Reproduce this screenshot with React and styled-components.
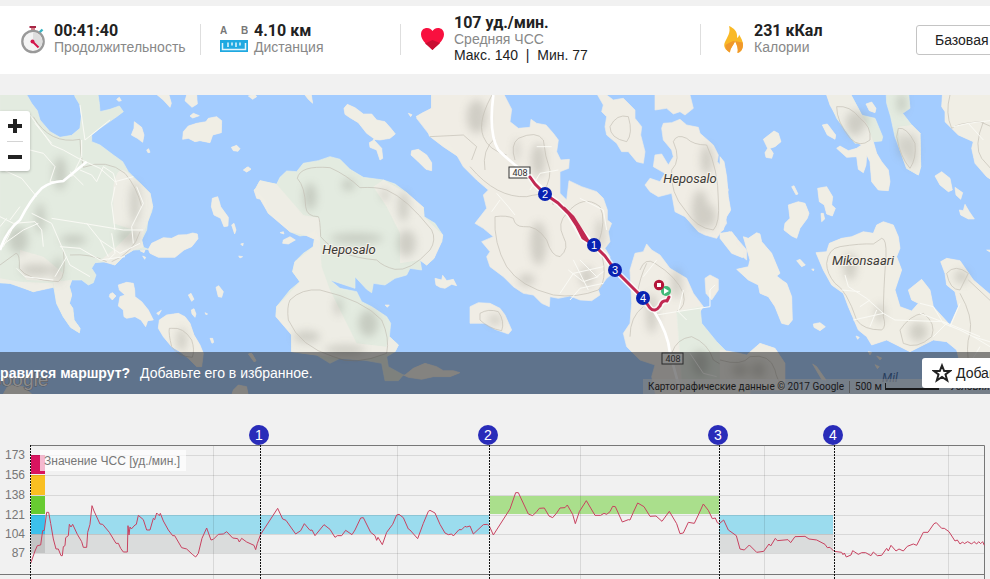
import React from "react";
import styled, { createGlobalStyle } from "styled-components";

const GlobalStyle = createGlobalStyle`
  * { box-sizing: border-box; }
  body {
    margin: 0;
    background: #f1f1f1;
    color: #222;
    font: 14px/16px "Liberation Sans", Arial, sans-serif;
    overflow-x: hidden;
  }
  button { font: inherit; color: inherit; cursor: pointer; }
`;

const Page = styled.main`
  display: flex;
  flex-direction: column;
  padding-top: 6px;
  overflow: hidden;
`;

const Summary = styled.header`
  display: flex;
  align-items: center;
  min-height: 68px;
  margin-bottom: 21px;
  background: #fff;
`;

const Stat = styled.section`
  display: flex;
  flex: 0 0 ${(p) => p.$basis}px;
  align-items: center;
  padding-bottom: 2px;
  &::before {
    content: "";
    width: 1px;
    height: 31px;
    margin-right: 19px;
    background: #dedede;
  }
  &:first-child::before { background: none; }
`;

const StatIcon = styled.span`
  display: flex;
  flex: 0 0 34px;
`;

const StatText = styled.div`
  display: flex;
  flex-direction: column;
  white-space: nowrap;
`;

const StatValue = styled.strong`
  font: bold 16px/16px Roboto, sans-serif;
  color: #222;
`;

const StatLabel = styled.span`
  color: #888;
`;

const StatRange = styled.span`
  color: #222;
  white-space: pre;
`;

const ModeButton = styled.button`
  flex: 0 0 140px;
  height: 30px;
  padding: 0 18px;
  text-align: left;
  background: #fff;
  border: 1px solid #c4c4c4;
  border-radius: 3px;
`;

const MapPanel = styled.section`
  position: relative;
  height: 299px;
  overflow: hidden;
  background: #a3ccff;
`;

const MapDrawing = styled.svg`
  display: block;
  width: 100%;
  height: 100%;
`;

const ZoomControls = styled.div`
  position: absolute;
  top: 16px;
  left: 0;
  display: flex;
  flex-direction: column;
  align-items: center;
  width: 30px;
  background: #fff;
  border-radius: 0 3px 3px 0;
  box-shadow: 0 1px 3px rgba(0, 0, 0, 0.25);
`;

const ZoomButton = styled.button`
  display: flex;
  align-items: center;
  justify-content: center;
  width: 16px;
  height: 30px;
  padding: 0;
  background: none;
  border: 0;
  & + & { border-top: 1px solid #d4d4d4; }
`;

const Attribution = styled.footer`
  position: absolute;
  right: 0;
  bottom: 0;
  display: flex;
  align-items: center;
  width: 347px;
  height: 15px;
  padding-left: 5px;
  gap: 5px;
  overflow: hidden;
  white-space: nowrap;
  background: rgba(245, 245, 245, 0.6);
  color: #111;
  font: 10px/14px Roboto, sans-serif;
`;

const Divider = styled.i`
  flex: none;
  width: 1px;
  height: 12px;
  background: #999;
`;

const Scale = styled.span`
  display: flex;
  align-items: center;
  gap: 3px;
  &::after {
    content: "";
    width: 52px;
    height: 5px;
    border: solid #111;
    border-width: 0 1px 2px;
  }
`;

const TermsLink = styled.a`
  margin-left: 6px;
  color: inherit;
  text-decoration: none;
`;

const Banner = styled.div`
  position: absolute;
  inset: auto 0 0 0;
  display: grid;
  grid-template-columns: minmax(0, 1fr) 68px;
  align-items: center;
  height: 42px;
  color: #fff;
  background: rgba(33, 33, 35, 0.52);
`;

const BannerText = styled.p`
  display: flex;
  gap: 10px;
  margin: 0 0 0 -10px;
  white-space: nowrap;
`;

const FavoriteButton = styled.button`
  display: flex;
  align-items: center;
  gap: 4px;
  width: 116px;
  height: 30px;
  padding: 0 10px;
  color: #222;
  background: #fff;
  border: 0;
  border-radius: 3px;
`;

const ChartPanel = styled.section`
  padding-top: 26px;
`;

const ChartDrawing = styled.svg`
  display: block;
  width: 100%;
  height: auto;
  font-family: "Liberation Sans", Arial, sans-serif;
`;

/* ---------- icons ---------- */

const Stopwatch = () => (
  <svg width="26" height="30" viewBox="0 0 26 30" aria-hidden="true">
    <path d="M19.500 8.500l3-3" stroke="#38b4c4" strokeWidth="2.400" />
    <path d="M11 3h4v5h-4z" fill="#d5828c" />
    <path d="M9.500 2h6.500v2h-6.500z" fill="#a82545" />
    <circle cx="13" cy="17.500" r="10.700" fill="#f4f4f4" stroke="#999" strokeWidth="2.300" />
    <path d="M13 8.500a9 9 0 0 1 6.500 15.500L13 17.500z" fill="#dedede" />
    <path d="M12.500 17.500l6 6" stroke="#d4144b" strokeWidth="2" />
    <circle cx="12.500" cy="17.500" r="2" fill="#d4144b" />
  </svg>
);

const Ruler = () => (
  <svg width="28" height="28" viewBox="0 0 28 28" aria-hidden="true">
    <g fontFamily="Liberation Sans, Arial, sans-serif" fontSize="10" fontWeight="bold" fill="#777">
      <text x="0" y="9">A</text>
      <text x="21" y="9">B</text>
    </g>
    <path d="M0 15h28v12H0z" fill="#1fa9e1" />
    <path d="M2.500 18v6.500h23V18M8 17.500v4.500M12 17.500v3M16 17.500v4.500M20 17.500v3" fill="none" stroke="#e5f6fd" strokeWidth="1.500" />
  </svg>
);

const Heart = () => (
  <svg width="26" height="24" viewBox="0 0 26 24" aria-hidden="true">
    <path d="M12.500 23C9 19 1 14 1 7.500C1 3 4 1 7 1S11.500 2.500 12.500 4C13.500 2.500 15 1 18 1S24 3 24 7.500C24 14 16 19 12.500 23z" fill="#f8103f" />
    <path d="M12.500 13L20 16C18 18 14.500 21 12.500 23C10.500 21 7.500 18.500 5 16.500z" fill="#c80e32" />
  </svg>
);

const Flame = () => (
  <svg width="28" height="30" viewBox="0 0 28 30" aria-hidden="true">
    <path d="M9 2C14 4 18 8 17 14c1.500-1 2-2 2-3.500C21 14 23 17 23 21c0 4-2 7-5.500 8C18.500 25 17 21 15 17c-1 4-5 7-5 11.500C5 26 3 22 5 18 7 13 11 9 9 2z" fill="#f9b926" />
    <path d="M15 17c-3 0-6 2-9.500 4-.500 3 1 6 4.500 7.500C10 24 14 21 15 17zM15 17c3 1 6 1 7.700 1.500C23.500 23 22 28 17.500 29 18.500 25 17 21 15 17z" fill="#f0982c" />
  </svg>
);

const Plus = () => (
  <svg width="14" height="14" viewBox="0 0 14 14" aria-hidden="true">
    <path d="M7 0v14M0 7h14" stroke="#222" strokeWidth="4" />
  </svg>
);

const Minus = () => (
  <svg width="14" height="4" viewBox="0 0 14 4" aria-hidden="true">
    <path d="M0 2h14" stroke="#222" strokeWidth="4" />
  </svg>
);

const Star = () => (
  <svg width="20" height="20" viewBox="0 0 20 20" aria-hidden="true">
    <path d="M10 2.500L12.200 8H18L13.500 11.500L15.200 17.500L10 14L4.800 17.500L6.500 11.500L2 8H7.800z" fill="none" stroke="#222" strokeWidth="2" />
  </svg>
);

/* ---------- map ---------- */

/* Each tile is drawn at three times the map scale, from its own left edge. */
const tiles = [
  {
    x: 0,
    green: [
      "M0 0H72L95 40L112 62L120 90L150 125L180 142L215 136L240 115L244 80L240 45L225 20L220 0H292L298 40L300 65L330 58L358 48L370 65L350 80L300 115L275 135L275 155L300 165L340 195L368 215L385 245L420 280L450 310L458 350L455 365L443 395L440 420L425 450L430 472L445 478L400 480L375 495L345 525L320 515L285 518L275 535L288 555L280 578L265 585L245 570L215 570L208 590L215 615L208 640L218 655L222 690L240 715L238 728L212 712L190 680L170 640L163 600L160 590L120 595L100 605L70 592L30 580L0 578Z",
    ],
    land: [
      "M340 290Q350 225 380 245L420 280L450 310L458 350L443 395L425 450L430 472L400 480L375 495L345 525L300 512L340 480L400 420L340 400Z",
      "M160 575L215 570L208 590L215 615L208 640L218 655L222 690L240 715L238 728L212 712L190 680L170 640Z",
      "M60 480L130 500L190 550L180 575L80 570L60 540Z",
      "M0 565L60 575L160 580L160 592L100 605L30 580L0 578Z",
      "M472 15L490 30L510 52L514 40L507 15Z",
      "M560 15L555 32L576 52L592 42L590 15Z",
      "M350 28L358 22L364 32L356 34Z",
      "M570 78L580 70L598 77L578 84Z",
      "M403 95L425 112L432 135L428 157L412 145L394 135L402 115Z",
      "M440 180L446 176L450 187L444 188Z",
      "M590 100L618 95L625 85L650 80L665 92L664 128L638 135L630 158L600 152L585 155L565 145L548 148L550 125L565 108Z",
      "M694 172L710 166L720 176L714 184L700 182Z",
      "M733 238L742 231L753 238L740 246Z",
      "M762 300L775 290L790 300L790 330L770 325Z",
      "M637 325L653 320L658 335L662 350L685 382L684 408L672 410L662 385L642 375L634 350Z",
      "M695 405L702 400L708 420L704 432Z",
      "M445 478L455 460L490 443L515 445L535 435L560 434L578 429L592 432L594 446L575 470L552 480L540 490L525 502L475 502L450 490Z",
      "M420 482L435 480L432 488ZM428 498L437 502L434 508ZM722 462L730 460L728 468ZM716 498L728 500L720 504Z",
      "M355 585L380 577L400 580L404 600L405 620L425 635L445 660L460 690L443 692L437 710L423 690L405 680L380 685L372 680L370 660L355 648L360 620L375 615L358 600Z",
      "M330 612L338 608L348 618L337 630L328 620Z",
      "M565 615L573 610L582 628L575 634ZM574 660L582 656L588 672L585 682L576 672ZM615 668L623 672L618 674ZM630 745L638 745L641 757L636 760ZM470 670L484 661L476 675Z",
      "M648 592L656 587L670 605L665 622L655 620Z",
      "M478 690L500 675L535 670L555 680L570 700L582 735L600 765L610 790L605 830L590 830L565 805L540 785L515 770L490 740L475 715Z",
      "M700 900L715 885L740 890L745 930H690ZM748 790L756 792L768 812L763 815Z",
      "M0 930L25 885L70 890L115 930Z",
    ],
    contours: [
      "M100 80Q150 165 240 148Q240 190 250 232Q320 205 375 250Q410 290 425 350",
      "M335 515Q400 490 420 425",
      "M210 495Q270 490 320 515",
      "M0 525L48 490Q60 490 58 535Q80 570 175 575Q200 560 190 480",
      "M515 715Q550 710 575 750Q585 780 577 802Q535 800 515 770Q505 730 508 715Z",
    ],
    roads: [
      "M90 75L130 130L155 165L190 180L235 205L300 235L345 275L400 260",
      "M90 180L130 190L165 230L150 275L190 275",
      "M0 235L65 265L110 320",
      "M0 380L40 400L105 395L125 420L130 470",
      "M95 370L155 400L185 470L210 525L270 560",
      "M155 385L250 400L370 420L430 420",
      "M260 400L300 450L325 500",
      "M180 470L240 475L300 510L375 500",
      "M245 150L245 200L215 260",
      "M0 470L70 420L115 400M105 100L155 160M240 45L255 150L330 90",
      "M410 290L430 340L395 410L400 460M335 430L345 490L325 510",
      "M210 245L250 285M240 240L275 255L290 275L310 230L340 250L350 285",
      "M345 290L335 340L345 420M30 390L60 350M50 535L75 560L160 570M35 420L10 470M200 500L165 560M300 450L360 490L420 460M0 410L20 385",
    ],
    main: ["M0 480Q20 420 60 390Q90 330 125 295Q150 275 190 273L260 215"],
    hills: [[180, 250, 20, 50], [405, 340, 15, 65], [220, 450, 40, 15], [120, 385, 15, 45], [110, 540, 50, 18], [385, 440, 35, 25], [545, 750, 15, 35], [55, 450, 30, 40], [175, 540, 14, 40]],
  },
  {
    x: 240,
    green: [
      "M45 300L60 272L85 278L110 283L120 262L140 243L170 245L190 220L235 212L270 200L300 208L330 238L370 262L430 270L465 282L500 308L530 348L550 352L552 380L585 400L608 435L605 455L590 470L582 505L560 525L540 510L545 540L510 535L500 555L465 565L435 585L400 580L395 608L380 598L345 560L345 595L315 585L270 570L300 595L350 605L365 635L395 650L440 680L452 700L448 740L475 765L465 785L440 800L445 830L490 855L475 872L435 872L425 820L370 810L300 805L270 820L230 795L155 785L155 735L135 690L108 680L110 650L150 600L180 575L158 545L165 515L190 490L220 470L228 420L200 435L180 438L150 425L120 392L85 370L75 330Z",
    ],
    land: [
      "M45 300L60 272L110 283L190 375L240 385L240 455L200 437L150 425L85 370Z",
      "M228 420L240 455L245 530L270 600L290 640L350 760L440 770L448 740L475 765L465 785L370 810L300 805L155 785L155 735L108 680L110 650L180 575L158 545L165 515L220 470Z",
      "M400 290L430 270L500 308L550 352L552 380L608 435L605 455L582 505L560 525L540 510L480 520L480 430L440 350Z",
      "M312 55L322 43L345 53L370 72L395 72L410 90L435 95L455 118L466 132L450 145L420 150L400 148L425 175L428 205L420 210L410 180L390 172L388 158L405 148L380 130L355 98L330 83L315 73Z",
      "M195 15L205 28L218 40L214 15ZM25 18L38 28L50 20L44 12Z",
      "M505 70L516 74L512 80ZM10 240L25 231L32 237L20 246Z",
      "M515 182L535 178L560 195L575 218L575 242L558 238L535 215L513 195Z",
      "M130 450L150 440L166 450L145 462L128 460ZM120 428L130 425L132 432Z",
      "M585 565L605 570L608 556L620 572L640 568L650 587L635 583L615 595L600 592L588 585Z",
      "M528 80L545 70L575 55V0H700V230L610 170L568 138L560 110Z",
      "M25 792L35 790L48 812L42 815ZM0 890L20 895L25 915H0Z",
      "M495 855L520 835L555 820L590 830L610 842L640 842L660 848L630 860L580 860L545 868L505 862L490 855Z",
      "M435 645L448 645L442 652Z",
    ],
    contours: [
      "M172 265Q180 225 270 233Q320 255 360 293Q410 290 440 300Q500 325 575 420Q590 450 570 480Q510 545 465 538Q430 530 410 510Q290 500 242 440Q240 385 235 380Q200 380 197 350Q195 290 172 265Z",
      "M150 630Q185 595 240 600Q370 630 425 690Q450 745 440 790Q340 830 280 800Q180 770 145 690Q140 650 150 630Z",
    ],
    roads: [],
    main: [],
    hills: [[210, 320, 20, 40], [325, 285, 20, 18], [435, 315, 12, 18], [490, 350, 16, 45], [350, 445, 80, 15], [500, 460, 28, 40], [295, 650, 12, 28], [385, 700, 30, 40], [200, 740, 40, 18], [315, 780, 60, 15]],
  },
  {
    x: 470,
    green: ["M620 665L690 650L695 700L740 755L770 785L840 800V930H640Z"],
    land: [
      "M-115 0H95L125 58L120 95L145 115L180 112L183 88L200 100L228 105L250 130L265 150L260 185L272 210L298 208L296 235L270 245L270 310L290 330L297 272L335 290L380 305L400 325L412 360L412 390L425 400L415 425L420 455L405 475L420 500L415 530L435 545L410 565L385 600L390 615L365 632L330 630L300 618L265 625L240 620L238 650L215 640L190 615L160 610L130 590L100 560L60 530L50 500L60 485L35 455L70 440L40 415L15 400L50 355L40 315L55 300L20 270L-20 230L-60 160L-125 130L-160 85L-115 55Z",
      "M380 10L410 15L430 30L460 25L495 60L495 85L515 110L512 135L525 185L520 220L500 215L475 185L455 185L440 160L410 135L405 110L410 80L395 65L400 45Z",
      "M555 15V60L590 55L610 72L630 65L645 75L670 55L660 15Z",
      "M580 100L605 98L630 88L650 105L685 112L690 130L730 165L745 195L742 215L755 230L755 250L775 300L765 320L780 365L765 375L770 400L740 445L705 435L685 425L645 380L615 365L605 310L565 320L540 305L525 285L540 265L570 275L585 250L550 230L555 195L575 192L595 225L610 200L605 180L580 150L575 115Z",
      "M750 435L780 425L800 445L830 480V510L800 485L775 460Z",
      "M480 540L495 490L520 485L530 462L545 480L570 495L600 535L650 565L670 610L700 650L680 680L640 720L640 780L660 930H560L545 860L555 825L510 810L470 770L460 730L480 700L485 640Z",
      "M705 565L720 555L745 568L745 600L725 630L708 610Z",
      "M0 650L25 638L60 640L90 655L105 675L125 720L115 732L75 718L45 700L0 700Z",
    ],
    contours: [
      "M75 0Q20 90 40 140Q55 180 110 195M-120 140L-20 135L20 170L5 210M45 240Q35 180 75 145",
      "M135 210Q120 165 145 145Q200 120 220 150Q225 200 240 240Q240 290 205 320M0 230Q80 325 170 320Q240 300 250 345",
      "M75 380Q110 375 130 385Q135 410 160 410Q200 405 230 450Q245 500 270 500Q300 475 280 440Q260 400 290 370Q340 310 390 350Q410 390 385 460Q420 560 385 600Q320 625 250 615Q150 590 110 530Q70 460 75 380Z",
      "M420 110Q440 70 475 80Q490 130 470 155Q420 145 420 110Z",
      "M610 155Q620 130 650 145Q670 165 710 165Q745 240 745 330Q750 400 730 420Q680 415 645 360Q600 310 605 240Q635 210 610 155Z",
      "M510 540Q525 500 555 520Q620 560 640 610Q650 650 620 665M500 620Q510 560 530 520",
      "M605 790Q620 745 665 740Q715 760 730 810L780 840M480 740Q480 680 520 650",
      "M30 670Q55 655 85 665Q105 695 95 722Q55 715 30 690Z",
    ],
    roads: [
      "M80 310L115 350L135 375M90 330L65 365M270 610L310 550L400 530M295 540L340 575L385 560M310 510L355 600M300 630L330 595L400 580",
      "M560 675L620 665L720 650L720 600L735 585M520 560L560 510M640 600L625 665L650 690M660 790L700 850L740 860",
      "M200 170L245 170M180 300L210 250L265 240M330 510L380 560L400 545",
      "M330 325L400 360L410 420",
    ],
    main: ["M70 15Q55 130 85 180Q120 215 180 260Q240 310 300 380L375 465Q410 500 435 545L550 660Q595 730 600 790L630 900"],
    hills: [[205, 210, 22, 50], [140, 180, 8, 35], [20, 80, 30, 50], [205, 460, 24, 65], [170, 570, 25, 18], [390, 430, 12, 45], [710, 210, 18, 45], [720, 380, 18, 35], [75, 690, 20, 15], [545, 670, 16, 60], [620, 580, 15, 45], [690, 820, 25, 40], [350, 560, 20, 30], [690, 360, 25, 60]],
  },
  {
    x: 720,
    green: [
      "M315 0H385L425 75L435 78L465 85L488 140L485 153L460 155L405 160L350 85Z",
      "M498 0H565L570 55L548 70L575 105L600 130L602 230L595 255L560 235L540 180L525 140L512 80L500 40Z",
    ],
    land: [
      "M315 0H385L425 75L440 100L460 155L470 190L485 215L505 240L510 275L505 302L475 300L455 275L450 215L440 195L438 225L430 248L415 238L410 200L380 202L350 175L360 168L385 182L410 175L425 165L405 155L355 90L330 45Z",
      "M535 110L575 105L600 130L602 230L595 255L560 235L540 180Z",
      "M438 42L455 36L468 55L465 68L448 62Z",
      "M307 105L322 102L347 135L345 148L322 135Z",
      "M130 148L162 123L175 130L183 155L165 170L150 175L160 190L155 205L138 202L135 188L143 175Z",
      "M215 290L222 287L234 312L228 314Z",
      "M205 345L235 335L255 340L267 370L262 385L240 415L230 445L215 438L192 420L195 400L210 385Z",
      "M293 295L320 290L338 320L335 345L346 355L337 378L320 372L313 345L298 335ZM303 370L310 370L314 387L305 395Z",
      "M70 440L85 445L110 428L120 432L125 455L155 490L180 550L170 558L188 572L200 580L215 620L217 690L205 705L185 700L165 650L145 620L120 610L115 585L85 570L50 538L85 530L90 510Z",
      "M0 430L35 425L50 445L48 462L72 480L68 503L35 490L0 445Z",
      "M230 512L240 508L256 525L245 530ZM275 537L282 537L280 543Z",
      "M280 702L300 698L316 710L300 722L282 712ZM408 738L418 742L413 748Z",
      "M0 200L12 215L20 260L25 320L32 360L20 380L10 420L0 425Z",
      "M668 0H830V280L800 260L765 220L755 175L760 155L715 135L675 95L675 65L665 50Z",
      "M645 258L665 245L690 265L697 300L685 305L660 285ZM705 292L728 308L722 328L708 315ZM718 360L730 362L735 343L748 365L763 387L745 387L722 375ZM800 480L812 480V487Z",
      "M288 488L320 485L328 460L365 445L395 440L430 425L460 430L470 405L490 395L520 405L535 440L540 475L530 500L545 540L525 600L540 650L575 663L595 640L575 630L565 600L605 568L630 600L640 650L690 705L715 650L705 605L680 585L675 550L662 515L680 505L720 512L760 570L830 630V880H735L710 780L680 755L640 750L570 785L500 750L455 765L440 740L415 720L385 650L370 610L335 585L310 540Z",
      "M0 780L50 788L80 795L120 760L165 775L195 820V900H0Z",
      "M278 822L290 830L318 870L305 868ZM470 798L485 804L480 810ZM445 785L455 787L450 795ZM465 824L478 830L472 836Z",
    ],
    contours: [
      "M350 50Q390 45 420 85Q455 110 450 150Q420 175 390 145Q350 95 350 50Z",
      "M535 115Q560 110 585 160Q590 205 570 235Q540 200 530 140Z",
      "M825 115L780 95Q710 100 695 115Q675 70 690 15M825 250L785 205Q760 170 790 95",
      "M320 520Q325 475 360 470Q420 460 460 462L485 445Q500 445 498 500Q490 600 490 680Q500 710 485 720Q430 720 410 690Q380 600 345 580Q320 550 320 520Z",
      "M540 720Q570 675 610 670Q650 700 635 740Q590 780 550 760Z",
      "M680 550Q705 520 745 550L720 600Q690 600 680 550M745 570L825 645M720 610Q760 680 750 730Q735 770 750 840",
      "M0 810Q65 830 90 800Q150 790 165 840Q170 870 190 890",
    ],
    roads: [
      "M375 555L385 590L440 625L490 670L525 690L670 695L780 740M365 600L420 605M420 650L450 630M470 660L450 710M490 670L400 690",
      "M670 700L640 650L600 640M670 700L720 720L760 740L825 760M700 110L745 100L790 150M745 100L825 90M760 740L810 770M750 820L780 770M600 670L680 700L640 740",
      "M720 640L690 710",
    ],
    main: [],
    hills: [[405, 100, 28, 38], [575, 180, 16, 50], [545, 40, 14, 30], [545, 165, 12, 40], [595, 725, 28, 30], [725, 560, 22, 20], [480, 670, 14, 30], [115, 840, 22, 25], [60, 840, 25, 20], [390, 530, 20, 40], [430, 90, 15, 22]],
  },
];

const mapMarkers = [
  { n: 2, x: 545, y: 194 },
  { n: 1, x: 594, y: 245 },
  { n: 3, x: 615, y: 270 },
  { n: 4, x: 643, y: 298 },
];

const RoadSign = ({ x, y }) => (
  <g>
    <rect x={x} y={y} width="21" height="11" fill="#fbfaf7" stroke="#333" />
    <text x={x + 11} y={y + 9} textAnchor="middle" fontFamily="Roboto, sans-serif" fontSize="9" fill="#333">408</text>
  </g>
);

const TerrainMap = () => (
  <MapDrawing viewBox="0 95 990 299" preserveAspectRatio="xMidYMid slice" role="img" aria-label="Карта маршрута">
    <defs>
      <filter id="relief" filterUnits="userSpaceOnUse" x="-200" y="-50" width="1200" height="1050">
        <feGaussianBlur stdDeviation="13" />
      </filter>
    </defs>
    {tiles.map((t) => (
      <g key={t.x} transform={`translate(${t.x} 90) scale(0.33333)`} strokeLinejoin="round">
        <g fill="#f0ede5" stroke="#f0ede5" strokeWidth="2">{t.land.map((d) => <path key={d} d={d} />)}</g>
        <g fill="#e3ebe0" stroke="#e8eee4" strokeWidth="2">{t.green.map((d) => <path key={d} d={d} />)}</g>
        {t.x !== 470 && (
          <g fill="#f0ede5" fillOpacity="0.85">{t.land.map((d) => <path key={d} d={d} />)}</g>
        )}
        <g fill="#77766c" opacity="0.26" filter="url(#relief)">
          {t.hills.map(([cx, cy, rx, ry]) => <ellipse key={`${cx}-${cy}`} cx={cx} cy={cy} rx={rx} ry={ry} />)}
        </g>
        <g fill="none" stroke="#c2beb4" strokeWidth="2">{t.contours.map((d) => <path key={d} d={d} />)}</g>
        <g fill="none" stroke="#fafaf5" strokeWidth="3">{t.roads.map((d) => <path key={d} d={d} />)}</g>
        <g fill="none" stroke="#fff" strokeWidth="8">{t.main.map((d) => <path key={d} d={d} />)}</g>
      </g>
    ))}
    <g fontFamily="Roboto, sans-serif" fontStyle="italic" fontSize="13" fill="#3c3a36" textAnchor="middle" stroke="#f4f1ea" strokeWidth="2" paintOrder="stroke">
      <text x="349" y="254">Heposalo</text>
      <text x="690" y="183">Heposalo</text>
      <text x="863" y="265">Mikonsaari</text>
    </g>
    <text x="882" y="382" fontFamily="Roboto, sans-serif" fontStyle="italic" fontSize="12" fill="#315e9c">Mil</text>
    <text x="-13" y="386" fontFamily="Liberation Sans, Arial, sans-serif" fontSize="19" fill="#fff" stroke="#8a8a8a" strokeWidth="1" paintOrder="stroke">Google</text>
    <RoadSign x={509} y={167} />
    <RoadSign x={662} y={353} />
    <g fill="none" strokeLinecap="round" strokeLinejoin="round">
      <path d="M530 177L535 184L545 194L558 203L569 214L583 238L594 245L605 256L610 263L615 270L630 285L643 298L650 308Q655 313 660 306Q662 300 667 301L669 297" stroke="#fff" strokeWidth="6" opacity="0.7" />
      <path d="M530 177L535 184L545 194L558 203L569 214L577 226L583 238L594 245L605 256L610 263L615 270L630 285L643 298L650 308Q655 313 660 306Q662 300 667 301L669 297M564 208L573 217L580 228L588 241" stroke="#c12952" strokeWidth="3" />
    </g>
    <circle cx="666" cy="291" r="5" fill="#41b978" />
    <path d="M664 288l5 3-5 3z" fill="#fff" />
    <circle cx="659" cy="285" r="5.200" fill="#b41439" />
    <rect x="657" y="283" width="4" height="4" fill="#fff" />
    <g fontFamily="Liberation Sans, Arial, sans-serif" fontSize="11" fill="#fff" textAnchor="middle">
      {mapMarkers.map((m) => (
        <g key={m.n}>
          <circle cx={m.x} cy={m.y} r="7" fill="#0923b2" />
          <text x={m.x} y={m.y + 4}>{m.n}</text>
        </g>
      ))}
    </g>
  </MapDrawing>
);

/* ---------- heart rate chart ---------- */

const levels = [
  { bpm: 173, y: 455 },
  { bpm: 156, y: 475 },
  { bpm: 138, y: 495 },
  { bpm: 121, y: 515 },
  { bpm: 104, y: 534 },
  { bpm: 87, y: 553 },
];

const zones = [
  { y: 455, height: 19, fill: "#d9145f" },
  { y: 475, height: 20, fill: "#f9bf22" },
  { y: 496, height: 18, fill: "#67cb31" },
  { y: 515, height: 19, fill: "#3cc1ec" },
  { y: 534, height: 19, fill: "#c3c4c4" },
];

const bands = [
  { x: 31, y: 515, width: 458, height: 19, fill: "#9bdcee" },
  { x: 31, y: 534, width: 229, height: 19, fill: "#dadcdc" },
  { x: 490, y: 496, width: 229, height: 18, fill: "#aadf8c" },
  { x: 719, y: 515, width: 114, height: 19, fill: "#9bdcee" },
  { x: 719, y: 534, width: 114, height: 19, fill: "#dadcdc" },
];

const kilometres = [
  { n: 1, x: 260 },
  { n: 2, x: 489 },
  { n: 3, x: 719 },
  { n: 4, x: 834 },
];

const heartRate =
  "92,445 105,408 112,392 122,390 128,347 133,346 140,292 146,292 152,325 160,372 168,402 175,402 183,422 187,422 190,395 195,392 197,368 205,362 208,328 213,336 218,328 232,358 245,380 250,397 260,397 263,352 270,328 276,272 282,288 300,327 308,328 328,352 348,385 355,385 362,400 370,411 382,411 384,332 387,360 390,336 394,342 405,330 409,328 415,301 430,314 440,345 450,345 460,310 464,314 470,294 478,302 481,295 490,318 505,345 518,362 524,362 545,398 560,402 577,418 587,426 595,415 606,370 620,339 633,375 640,373 655,358 670,357 680,350 698,369 713,371 718,381 725,370 740,381 762,391 767,404 772,385 782,358 " +
  "833,280 848,312 858,316 887,357 902,347 913,326 930,346 936,345 945,362 972,329 990,343 1005,367 1012,362 1025,362 1037,346 1056,359 1065,345 1082,309 1090,308 1112,352 1125,362 1130,376 1134,367 1147,389 1160,352 1178,328 1190,300 1197,298 1210,308 1225,342 1230,345 1253,371 1270,325 1285,289 1290,286 1305,294 1320,328 1335,354 1345,359 1355,357 1360,363 1377,344 1385,344 1395,334 1400,336 1410,333 1420,357 1450,329 1462,328 1468,333 " +
  "1480,360 1530,282 1547,233 1555,233 1585,297 1598,302 1610,290 1618,280 1633,279 1647,303 1658,308 1670,294 1680,279 1695,278 1702,270 1718,298 1726,326 1738,290 1759,257 1785,301 1802,301 1812,295 1820,298 1830,290 1838,274 1846,275 1867,321 1885,314 1890,315 1900,292 1913,264 1932,275 1950,304 1968,303 1986,319 2008,289 2030,326 2040,356 2050,354 2065,322 2083,325 2095,300 2110,267 2125,286 2137,311 2146,309 2152,323 2158,326 " +
  "2171,315 2185,345 2209,362 2220,402 2233,405 2248,390 2270,412 2291,409 2307,387 2312,393 2326,370 2332,377 2364,374 2372,383 2385,365 2415,364 2427,372 2450,375 2475,388 2482,398 2490,397 2502,409 2525,412 2529,419 2533,414 2539,426 2553,420 2558,407 2575,418 2585,413 2597,413 2613,422 2620,411 2632,422 2645,421 2660,400 2665,408 2673,391 2688,408 2697,402 2710,408 2722,394 2740,387 2750,391 2770,352 2784,352 2802,326 2809,323 2825,340 2833,340 2847,350 2865,378 2872,375 2880,387 2888,381 2893,386 2903,380 2915,387 2922,380 2930,387 2936,380 2942,386 2948,380 2953,391";

const HeartRateChart = () => (
  <ChartDrawing viewBox="0 420 990 159" role="img" aria-label="Значение ЧСС">
    {bands.map((b) => <rect key={`${b.x}-${b.y}`} {...b} />)}
    {zones.map((z) => <rect key={z.y} x="31" width="14" {...z} />)}
    <g stroke="#000" strokeOpacity="0.1">
      {levels.map((l) => <path key={l.bpm} d={`M31 ${l.y + 0.5}H984`} />)}
      {[213, 397, 580, 764, 948].map((x) => <path key={x} d={`M${x + 0.5} 446V579`} />)}
    </g>
    <path d="M30 445.500H984.500V579M0 574.500H984" fill="none" stroke="#777" />
    <g fill="#777" fontSize="12" textAnchor="end">
      {levels.map((l) => <text key={l.bpm} x="25" y={l.y + 4}>{l.bpm}</text>)}
    </g>
    <polyline transform="translate(0 415) scale(0.33333)" points={heartRate} fill="none" stroke="#c8415f" strokeWidth="3" strokeLinejoin="round" />
    <rect x="40" y="450" width="146" height="21" fill="#fff" fillOpacity="0.7" />
    <text x="44" y="465" fontSize="12" fill="#777">Значение ЧСС [уд./мин.]</text>
    <path d="M30.500 445V579" stroke="#111" strokeDasharray="2 1" />
    {kilometres.map((k) => (
      <g key={k.n}>
        <path d={`M${k.x + 0.5} 445V579`} stroke="#111" strokeDasharray="2 1" />
        <circle cx={k.x - 1} cy="435" r="10" fill="#292cb9" />
        <text x={k.x - 1} y="440" fontSize="14" fill="#fff" textAnchor="middle">{k.n}</text>
      </g>
    ))}
  </ChartDrawing>
);

const stats = [
  { value: "00:41:40", label: "Продолжительность", basis: 200, Icon: Stopwatch },
  { value: "4.10 км", label: "Дистанция", basis: 200, Icon: Ruler },
  { value: "107 уд./мин.", label: "Средняя ЧСС", range: "Макс. 140  |  Мин. 77", basis: 300, Icon: Heart },
  { value: "231 кКал", label: "Калории", basis: 216, Icon: Flame },
];

export default function App() {
  return (
    <Page>
      <GlobalStyle />
      <Summary>
        {stats.map(({ value, label, range, basis, Icon }) => (
          <Stat key={label} $basis={basis}>
            <StatIcon><Icon /></StatIcon>
            <StatText>
              <StatValue>{value}</StatValue>
              <StatLabel>{label}</StatLabel>
              {range && <StatRange>{range}</StatRange>}
            </StatText>
          </Stat>
        ))}
        <ModeButton type="button">Базовая</ModeButton>
      </Summary>
      <MapPanel>
        <TerrainMap />
        <Attribution>
          <span>Картографические данные © 2017 Google</span>
          <Divider />
          <Scale>500 м</Scale>
          <TermsLink href="#terms">Условия</TermsLink>
        </Attribution>
        <Banner>
          <BannerText>
            <strong>Нравится маршрут?</strong>
            <span>Добавьте его в избранное.</span>
          </BannerText>
          <FavoriteButton type="button"><Star />Добавить</FavoriteButton>
        </Banner>
        <ZoomControls>
          <ZoomButton type="button" aria-label="Увеличить"><Plus /></ZoomButton>
          <ZoomButton type="button" aria-label="Уменьшить"><Minus /></ZoomButton>
        </ZoomControls>
      </MapPanel>
      <ChartPanel>
        <HeartRateChart />
      </ChartPanel>
    </Page>
  );
}
